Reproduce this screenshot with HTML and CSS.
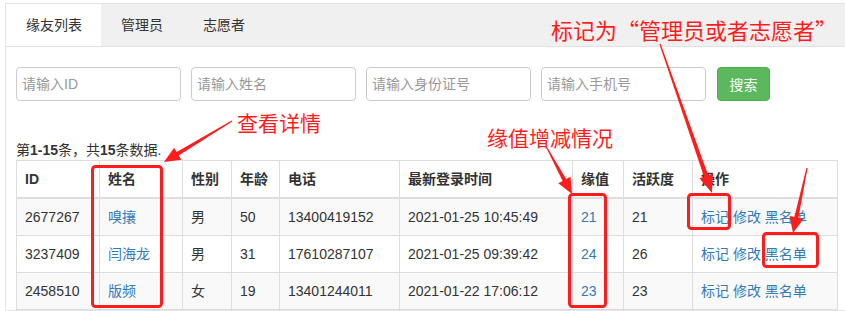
FILE: index.html
```html
<!DOCTYPE html>
<html lang="zh-CN">
<head>
    <meta charset="UTF-8">
    <title>缘友列表</title>
    <link rel="stylesheet" href="styles.css">
</head>
<body>
    <div class="page">
        <div class="panel">
            <ul class="tabs">
                <li class="active">缘友列表</li>
                <li>管理员</li>
                <li>志愿者</li>
            </ul>
            <div class="panel-body">
                <form class="search">
                    <input type="text" placeholder="请输入ID">
                    <input type="text" placeholder="请输入姓名">
                    <input type="text" placeholder="请输入身份证号">
                    <input type="text" placeholder="请输入手机号">
                    <button type="button">搜索</button>
                </form>
                <div class="summary">第<b>1-15</b>条，共<b>15</b>条数据.</div>
                <table class="grid">
                    <colgroup>
                        <col style="width:83px">
                        <col style="width:83px">
                        <col style="width:49px">
                        <col style="width:48px">
                        <col style="width:120px">
                        <col style="width:173px">
                        <col style="width:51px">
                        <col style="width:69px">
                        <col>
                    </colgroup>
                    <thead>
                        <tr>
                            <th>ID</th>
                            <th>姓名</th>
                            <th>性别</th>
                            <th>年龄</th>
                            <th>电话</th>
                            <th>最新登录时间</th>
                            <th>缘值</th>
                            <th>活跃度</th>
                            <th>操作</th>
                        </tr>
                    </thead>
                    <tbody>
                        <tr>
                            <td>2677267</td>
                            <td><a href="#">嗅攘</a></td>
                            <td>男</td>
                            <td>50</td>
                            <td>13400419152</td>
                            <td>2021-01-25 10:45:49</td>
                            <td><a href="#">21</a></td>
                            <td>21</td>
                            <td><a href="#">标记</a> <a href="#">修改</a> <a href="#">黑名单</a></td>
                        </tr>
                        <tr>
                            <td>3237409</td>
                            <td><a href="#">闫海龙</a></td>
                            <td>男</td>
                            <td>31</td>
                            <td>17610287107</td>
                            <td>2021-01-25 09:39:42</td>
                            <td><a href="#">24</a></td>
                            <td>26</td>
                            <td><a href="#">标记</a> <a href="#">修改</a> <a href="#">黑名单</a></td>
                        </tr>
                        <tr>
                            <td>2458510</td>
                            <td><a href="#">版频</a></td>
                            <td>女</td>
                            <td>19</td>
                            <td>13401244011</td>
                            <td>2021-01-22 17:06:12</td>
                            <td><a href="#">23</a></td>
                            <td>23</td>
                            <td><a href="#">标记</a> <a href="#">修改</a> <a href="#">黑名单</a></td>
                        </tr>
                    </tbody>
                </table>
            </div>
        </div>

        <!-- annotations drawn over the screenshot -->
        <span class="note note-mark">标记为“管理员或者志愿者”</span>
        <span class="note note-detail">查看详情</span>
        <span class="note note-value">缘值增减情况</span>
        <svg class="marks" width="845" height="311" viewBox="0 0 845 311">
            <g fill="none" stroke="#ff1c1c" stroke-width="3">
                <rect x="92.5" y="166.5" width="69" height="140" rx="3"/>
                <rect x="569.5" y="194.5" width="36" height="112" rx="3"/>
                <rect x="688.5" y="194.5" width="41" height="34" rx="3"/>
                <rect x="763.5" y="233.5" width="54" height="33" rx="3"/>
            </g>
            <g fill="#ff1c1c">
                <polygon points="232.3,121.5 178.7,155.4 181.3,159.7 164,162 174.1,147.7 176.7,152.0 231.7,120.5"/>
                <polygon points="546.5,148.3 562.6,181.0 558.3,183.3 572,194 570.5,176.7 566.2,179.0 547.5,147.7"/>
                <polygon points="659.4,44.2 704.0,176.7 699.5,178.3 712,193 712.7,173.7 708.2,175.3 660.6,43.8"/>
                <polygon points="806.4,167.9 794.4,217.0 789.6,215.9 793,233 803.2,218.9 798.4,217.8 807.6,168.1"/>
            </g>
        </svg>
    </div>
</body>
</html>
```

FILE: styles.css
```css
body {
    margin: 0;
    font-family: "Liberation Sans", "Noto Sans CJK SC", sans-serif;
    font-size: 14px;
    line-height: 20px;
    color: #333;
    background: #fff;
}
.page {
    position: relative;
    width: 845px;
    height: 311px;
    overflow: hidden;
    padding: 3px 0 0 5px;
    box-sizing: border-box;
}
.panel {
    width: 844px;
    border: 1px solid #e4e4e4;
    border-right: none;
}
.tabs {
    display: flex;
    margin: 0;
    padding: 0;
    list-style: none;
    background: #f0f0f0;
    border-bottom: 1px solid #e2e2e2;
}
.tabs li {
    padding: 11px 20px;
    line-height: 20px;
    color: #333;
}
.tabs li.active {
    background: #fff;
    padding-left: 20px;
    padding-right: 19px;
}
.panel-body {
    padding: 20px 10px 0 10px;
}
.search {
    display: flex;
    gap: 10px;
    margin: 0;
}
.search input {
    width: 165px;
    height: 34px;
    box-sizing: border-box;
    padding: 6px 5px;
    border: 1px solid #ccc;
    border-radius: 4px;
    font-family: inherit;
    font-size: 14px;
    color: #555;
}
.search input::placeholder {
    color: #999;
}
.search button {
    margin-left: 1px;
    height: 34px;
    width: 53px;
    padding: 0;
    border: 1px solid #4cae4c;
    border-radius: 4px;
    background: #5cb85c;
    color: #fff;
    font-family: inherit;
    font-size: 14px;
}
.summary {
    margin-top: 39px;
    height: 20px;
}
.grid {
    width: 822px;
    table-layout: fixed;
    border-collapse: collapse;
    border: 1px solid #ddd;
}
.grid th,
.grid td {
    padding: 8px;
    line-height: 20px;
    text-align: left;
    border: 1px solid #ddd;
    white-space: nowrap;
}
.grid th {
    font-weight: bold;
    border-bottom: 2px solid #ddd;
}
.grid tbody tr:nth-child(odd) {
    background: #f9f9f9;
}
.grid a {
    color: #337ab7;
    text-decoration: none;
}
.note {
    position: absolute;
    color: #ff1c1c;
    font-family: "Noto Sans CJK SC", sans-serif;
    font-size: 21px;
    line-height: 26px;
    white-space: nowrap;
}
.note-mark {
    left: 551px;
    top: 16px;
    font-size: 22px;
}
.note-detail {
    left: 237px;
    top: 109px;
}
.note-value {
    left: 487px;
    top: 124px;
}
.marks {
    position: absolute;
    left: 0;
    top: 0;
    pointer-events: none;
}
```
